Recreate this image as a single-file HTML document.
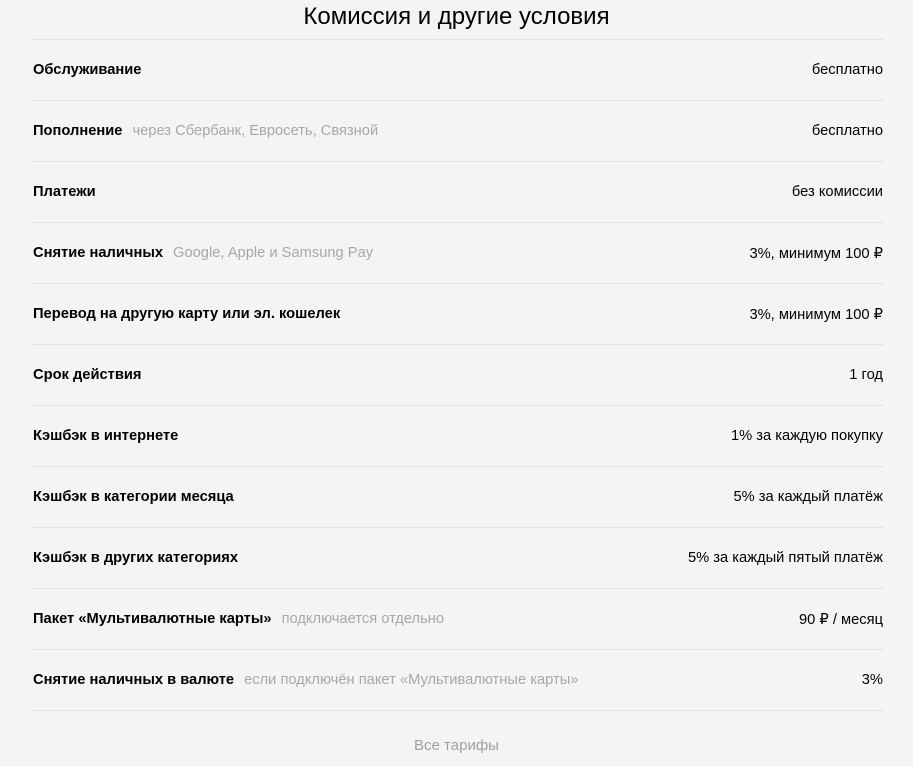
<!DOCTYPE html>
<html><head><meta charset="utf-8"><style>
body{margin:0;background:#f4f4f4;font-family:"Liberation Sans","DejaVu Sans",sans-serif;color:#000;width:913px;height:766px;overflow:hidden;position:relative}
h1{position:absolute;top:0;left:0;width:913px;margin:0;text-align:center;font-weight:normal;font-size:24px;line-height:34px}
.list{position:absolute;top:39px;left:33px;width:850px}
.row{height:60px;border-top:1px solid #dfe1e3;display:flex;justify-content:space-between;align-items:center;font-size:14.7px}
.row b{font-weight:bold}
.row span.g{color:#a8a8a8;margin-left:10px}
.last{border-top:1px solid #dfe1e3;width:850px}
.all{position:absolute;top:737px;left:0;width:913px;text-align:center;color:#a0a0a0;font-size:15px}
</style></head><body>
<h1>Комиссия и другие условия</h1>
<div class="list">
<div class="row"><div><b>Обслуживание</b></div><div class="r">бесплатно</div></div>
<div class="row"><div><b>Пополнение</b><span class="g">через Сбербанк, Евросеть, Связной</span></div><div class="r">бесплатно</div></div>
<div class="row"><div><b>Платежи</b></div><div class="r">без комиссии</div></div>
<div class="row"><div><b>Снятие наличных</b><span class="g">Google, Apple и Samsung Pay</span></div><div class="r">3%, минимум 100 ₽</div></div>
<div class="row"><div><b>Перевод на другую карту или эл. кошелек</b></div><div class="r">3%, минимум 100 ₽</div></div>
<div class="row"><div><b>Срок действия</b></div><div class="r">1 год</div></div>
<div class="row"><div><b>Кэшбэк в интернете</b></div><div class="r">1% за каждую покупку</div></div>
<div class="row"><div><b>Кэшбэк в категории месяца</b></div><div class="r">5% за каждый платёж</div></div>
<div class="row"><div><b>Кэшбэк в других категориях</b></div><div class="r">5% за каждый пятый платёж</div></div>
<div class="row"><div><b>Пакет «Мультивалютные карты»</b><span class="g">подключается отдельно</span></div><div class="r">90 ₽ / месяц</div></div>
<div class="row"><div><b>Снятие наличных в валюте</b><span class="g">если подключён пакет «Мультивалютные карты»</span></div><div class="r">3%</div></div>
<div class="last"></div>
</div>
<div class="all">Все тарифы</div>
</body></html>
